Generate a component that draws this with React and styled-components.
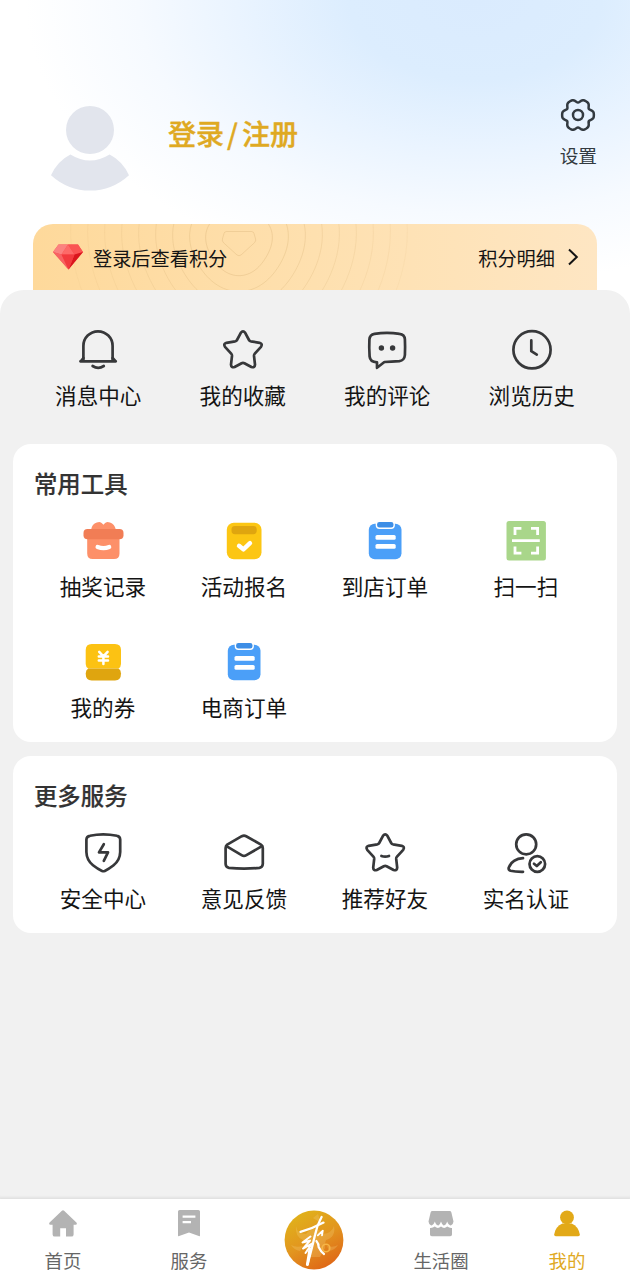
import React from "react";
import styled, { createGlobalStyle } from "styled-components";

const GlobalStyle = createGlobalStyle`
  * {
    box-sizing: border-box;
  }
  body {
    margin: 0;
    background: #f1f1f1;
    font-family: "Noto Sans CJK SC", sans-serif;
    color: #141414;
  }
`;

const DARK = "#37383a";

const starPath =
  "M17.8 2.8 Q20 -0.2 22.2 2.8 L26 10 Q26.6 11 27.8 11.3 L36.6 12.8 Q39.9 13.8 38 16.8 L31.8 23.6 Q30.9 24.6 31 25.9 L32 34.6 Q31.8 38 28.4 37 L21.4 33.2 Q20 32.5 18.6 33.2 L11.6 37 Q8.2 38 8 34.6 L9 25.9 Q9.1 24.6 8.2 23.6 L2 16.8 Q0.1 13.8 3.4 12.8 L12.2 11.3 Q13.4 11 14 10 Z";

const icons = {
  bell: (
    <>
      <path d="M5.4 30.5V15.9a14.6 14.6 0 0 1 29.2 0V30.5" />
      <path d="M2.4 31.3H37.8M5.4 28L3 31M34.6 28L37.2 31" />
      <path d="M14.6 36q5.6 3.6 11.2 0" />
    </>
  ),
  star: <path d={starPath} />,
  comment: (
    <>
      <path d="M7.5 3.8Q20 2 32.5 3.8Q37.6 4.4 37.9 9.4Q38.3 17 37.9 25Q37.4 30.4 32.4 31.2Q24 32 17.4 32L10 37.8V32.4Q3 32 2.6 26.4Q2 17 2.4 9.6Q2.8 4.4 7.5 3.8Z" />
      <g fill={DARK} stroke="none">
        <circle cx="14.4" cy="18" r="2.7" />
        <circle cx="25.6" cy="18" r="2.7" />
      </g>
    </>
  ),
  clock: (
    <>
      <circle cx="20" cy="19.8" r="18.6" />
      <path d="M19.3 10.4V21.2L24.8 24.6" />
    </>
  ),
  gift: (
    <g stroke="none">
      <path
        fill="#fd9069"
        d="M4.2 15H36.5V32.5Q36.5 38 31 38H9.7Q4.2 38 4.2 32.5ZM8 9Q9 3 13.8 1.6Q17.5 0.2 19.2 2.6L20.4 3.8L21.6 2.6Q23.3 0.2 27 1.6Q31.5 3 33 9Z"
      />
      <rect x="0.5" y="8" width="40" height="10.2" rx="4" fill="#f17d55" />
      <path
        d="M14.6 26Q20.6 28.2 26.2 26"
        fill="none"
        stroke="#fff"
        strokeWidth="4.2"
      />
    </g>
  ),
  signup: (
    <g stroke="none">
      <rect x="2.8" y="1.7" width="34.7" height="36.5" rx="7" fill="#fcc613" />
      <rect x="7.5" y="5" width="25.2" height="8.2" rx="3.4" fill="#dfa50f" />
      <path
        d="M15 24.8L19.4 28.4L26 22.2"
        fill="none"
        stroke="#fff"
        strokeWidth="4.4"
      />
    </g>
  ),
  order: (
    <g stroke="none">
      <rect x="3.8" y="2.7" width="32.7" height="35.5" rx="6" fill="#4b9ff8" />
      <rect
        x="11.4"
        y="0.2"
        width="17.8"
        height="7"
        rx="3"
        fill="#3d8ee6"
        stroke="#fff"
        strokeWidth="1.4"
      />
      <rect x="10.5" y="14" width="20.2" height="4.8" rx="1.6" fill="#fff" />
      <rect x="10.5" y="23" width="20.2" height="4.8" rx="1.6" fill="#fff" />
    </g>
  ),
  scan: (
    <>
      <rect
        x="0.5"
        y="0"
        width="39.4"
        height="39.4"
        rx="2.5"
        fill="#a9d68a"
        stroke="none"
      />
      <path
        d="M9 14V7.4H15.4M25 7.4H31.6V14M31.6 25.4V32.2H25M15.4 32.2H9V25.4M6 19.7H33.8"
        stroke="#fff"
        strokeWidth="2.8"
        strokeLinecap="butt"
        strokeLinejoin="miter"
      />
    </>
  ),
  coupon: (
    <g stroke="none">
      <path
        fill="#fcc213"
        d="M8.7 2H32Q38 2 38 8V22Q38 25 35.5 26.6H5.2Q2.7 25 2.7 22V8Q2.7 2 8.7 2Z"
      />
      <path
        fill="#dfa50f"
        d="M5.2 26.6H35.5Q38 28 38 31.5Q38 38.4 32 38.4H8.7Q2.7 38.4 2.7 31.5Q2.7 28 5.2 26.6Z"
      />
      <path
        d="M16.2 9.8L20.4 14.4L24.6 9.8M20.4 14.4V22M15.8 14.6H25M15.8 18.4H25"
        fill="none"
        stroke="#fff"
        strokeWidth="2.5"
      />
    </g>
  ),
  shield: (
    <>
      <path d="M7 2.8Q20 -0.2 34 2.8Q37 3.3 37.2 6.5V19Q37 27 30.6 32.3Q26 36 21.8 37.9Q20.4 38.6 19 37.9Q14.6 36 10 32.3Q3.6 27 3.4 19V6.5Q3.6 3.3 7 2.8Z" />
      <path d="M20.8 11.2L16 19.4H25L20.8 27.8" />
    </>
  ),
  mail: (
    <>
      <path d="M3.2 11.6L17.8 3.2Q20 2 22.2 3.2L37 11.6Q38.8 12.8 38.8 15V31Q38.6 34.4 35.4 34.9Q20 36.4 5 34.9Q1.8 34.4 1.6 31V15Q1.6 12.8 3.2 11.6Z" />
      <path d="M2.4 13.2L17.6 22.2Q20 23.6 22.4 22.2L38 13.2" />
    </>
  ),
  recommend: (
    <>
      <path d={starPath} transform="translate(0.2 0)" />
      <path d="M16.4 23Q20.2 24.4 24 23" />
    </>
  ),
  verify: (
    <>
      <circle cx="20.2" cy="11.3" r="10" />
      <path d="M17 25.2Q6.2 26 2.8 34.4Q2 37 4.6 37.8Q9 38.9 17 38.8" />
      <circle cx="31.3" cy="31" r="7.8" />
      <path d="M28 30.8L30.8 33L34.8 29.2" />
    </>
  ),
};

const tabIcons = {
  home: (
    <path d="M12.9 0.8Q14 -0.1 15.1 0.8L27.4 12.6Q28.6 14.2 26.6 14.7H24.6V24.4Q24.6 26.6 22.4 26.6H17V18.2H11.2V26.6H5.8Q3.6 26.6 3.6 24.4V14.7H1.4Q-0.6 14.2 0.6 12.6Z" />
  ),
  service: (
    <>
      <path d="M4.6 0H23.4Q25 0 25 1.6V25.4Q25 26.6 23.8 26L14 22.6L4.2 26Q3 26.6 3 25.4V1.6Q3 0 4.6 0Z" />
      <path
        d="M7.6 6.6H20.4M7.6 12.2H16"
        stroke="#fff"
        strokeWidth="2.2"
        fill="none"
      />
    </>
  ),
  life: (
    <>
      <path d="M5.4 1H22.6Q24 1 24.4 2.4L26.5 11.6Q26.3 14.6 23.8 15.4Q21.6 15.6 20.2 11.6Q18.6 15.8 16.6 15.4Q15 15 14 11.6Q13 15 11.4 15.4Q9.4 15.8 7.8 11.6Q6.4 15.6 4.2 15.4Q1.7 14.6 1.5 11.6L3.6 2.4Q4 1 5.4 1Z" />
      <path d="M3 17.9Q5.6 18.2 7.8 16.6Q10.8 19.4 14 16.6Q17.2 19.4 20.2 16.6Q22.4 18.2 25 17.9V24.4Q25 26.2 23.2 26.2H4.8Q3 26.2 3 24.4Z" />
    </>
  ),
  mine: (
    <>
      <circle cx="14" cy="7.4" r="6.9" />
      <path d="M9.4 13.6H18.6Q25.4 16.4 26.8 24.6Q27 26.3 25.2 26.3H2.8Q1 26.3 1.2 24.6Q2.6 16.4 9.4 13.6Z" />
    </>
  ),
};

const quickLinks = [
  { icon: "bell", label: "消息中心" },
  { icon: "star", label: "我的收藏" },
  { icon: "comment", label: "我的评论" },
  { icon: "clock", label: "浏览历史" },
];

const tools = [
  { icon: "gift", label: "抽奖记录" },
  { icon: "signup", label: "活动报名" },
  { icon: "order", label: "到店订单" },
  { icon: "scan", label: "扫一扫" },
  { icon: "coupon", label: "我的券" },
  { icon: "order", label: "电商订单" },
];

const services = [
  { icon: "shield", label: "安全中心" },
  { icon: "mail", label: "意见反馈" },
  { icon: "recommend", label: "推荐好友" },
  { icon: "verify", label: "实名认证" },
];

// six soft teeth around the centre
const gearPath = () => {
  const points = [];
  for (let i = 0; i < 120; i++) {
    const a = (i / 120) * Math.PI * 2;
    const r = 14.6 + 1.7 * Math.cos(6 * a) - 0.45 * Math.cos(12 * a);
    points.push(
      `${(18 + r * Math.cos(a)).toFixed(2)} ${(18 + r * Math.sin(a)).toFixed(2)}`
    );
  }
  return `M${points.join("L")}Z`;
};

// one contour line of the points card pattern, a triangle that gets rounder outwards
const contour = (radius) => {
  const bump = 0.3 / Math.sqrt(radius);
  const points = [];
  for (let i = 0; i < 90; i++) {
    const a = (i / 90) * Math.PI * 2;
    const r = radius * (1 - bump * Math.sin(3 * a));
    points.push(
      `${(206 + r * Math.cos(a)).toFixed(2)} ${(18 + r * Math.sin(a) * 0.97).toFixed(2)}`
    );
  }
  return `M${points.join("L")}Z`;
};

const LinkItem = ({ icon, label }) => (
  <Item>
    <ItemIcon viewBox="0 0 40 40">{icons[icon]}</ItemIcon>
    <ItemLabel>{label}</ItemLabel>
  </Item>
);

const Tab = ({ icon, label, active }) => (
  <TabItem $active={active}>
    <TabIcon viewBox="0 0 28 27" $active={active}>
      {tabIcons[icon]}
    </TabIcon>
    <span>{label}</span>
  </TabItem>
);

const App = () => {
  return (
    <>
      <GlobalStyle />
      <Page>
        <Header>
          <Profile>
            <Avatar viewBox="0 0 80 86">
              <circle cx="40" cy="24" r="24" />
              <path d="M20.4 48.4Q40 60.4 59.6 48.4Q72.6 55 79 69.2Q62 84.6 40 84.6Q18 84.6 1 69.2Q7.4 55 20.4 48.4Z" />
            </Avatar>
            <Login>
              登录<Slash>/</Slash>注册
            </Login>
            <Settings>
              <GearIcon viewBox="0 0 36 36">
                <path d={gearPath()} />
                <circle cx="18" cy="18" r="5" />
              </GearIcon>
              <span>设置</span>
            </Settings>
          </Profile>
          <PointsCard>
            <Contours viewBox="0 0 564 66">
              <path d="M193.5 7.5H218.5Q220.5 7.5 221 9.5L222.6 15Q223 17 221.6 18.6L208 31Q206 32.4 204 31L190.4 18.6Q189 17 189.4 15L191 9.5Q191.5 7.5 193.5 7.5Z" />
              {[33, 49, 66, 83, 100, 117, 134, 151, 168].map((r, i) => (
                <path key={r} d={contour(r)} opacity={1 - i * 0.09} />
              ))}
            </Contours>
            <Gem viewBox="0 0 30 26">
              <path d="M5.5 0.5H25L30 8L15.5 25.6L0 8Z" fill="#f9494c" />
              <path d="M5.5 0.5H15L8.5 10.6L0 8Z" fill="#fb8280" />
              <path d="M0 8L8.5 10.6L15.5 25.6Z" fill="#f76363" />
              <path d="M15 0.5L21.5 10.6H8.5Z" fill="#fd6a68" />
              <path d="M15 0.5H25L30 8L21.5 10.6Z" fill="#fa5453" />
              <path d="M30 8L21.5 10.6L15.5 25.6Z" fill="#d9161d" />
              <path d="M8.5 10.6H21.5L15.5 25.6Z" fill="#f23a3e" />
            </Gem>
            <PointsText>登录后查看积分</PointsText>
            <PointsLink>
              积分明细
              <Chevron viewBox="0 0 12 18">
                <path d="M2 1.5L9.8 9L2 16.5" />
              </Chevron>
            </PointsLink>
          </PointsCard>
        </Header>

        <Content>
          <QuickRow>
            {quickLinks.map((item) => (
              <LinkItem key={item.label} {...item} />
            ))}
          </QuickRow>

          <Card>
            <CardTitle>常用工具</CardTitle>
            <Grid>
              {tools.map((item) => (
                <LinkItem key={item.label} {...item} />
              ))}
            </Grid>
          </Card>

          <Card>
            <CardTitle>更多服务</CardTitle>
            <Grid>
              {services.map((item) => (
                <LinkItem key={item.label} {...item} />
              ))}
            </Grid>
          </Card>
        </Content>

        <TabBar>
          <Tab icon="home" label="首页" />
          <Tab icon="service" label="服务" />
          <TabItem>
            <Logo viewBox="0 0 60 60">
              <defs>
                <linearGradient id="logo" x1="0.2" y1="0" x2="0.75" y2="1">
                  <stop offset="0" stopColor="#e0b41a" />
                  <stop offset="0.5" stopColor="#e2961f" />
                  <stop offset="1" stopColor="#df6416" />
                </linearGradient>
              </defs>
              <circle cx="30" cy="30" r="29.4" fill="url(#logo)" />
              <g fill="#f6cf7a" opacity="0.28">
                <path d="M12 16Q13 24 22 24Q26 19 30 19Q36 19 39 24Q48 23 50 16Q52 27 42 30Q40 34 41 38L36 47H26L21 38Q21 33 19 30Q11 27 12 16Z" />
                <path d="M7 35Q12 38 19 36L16 41Q10 40 7 35ZM54 35Q49 38 43 36L45 41Q51 40 54 35ZM29 8L34 4L37 13Z" />
              </g>
              <circle
                cx="42"
                cy="38"
                r="3.8"
                fill="none"
                stroke="#f7b545"
                strokeWidth="1.6"
              />
              <g
                fill="none"
                stroke="#fff"
                strokeLinecap="round"
                strokeLinejoin="round"
              >
                <path d="M16.5 21.8Q28 19 39.5 12.6" strokeWidth="2.3" />
                <path d="M37.6 7Q33 15 31 25Q27 42 23.6 54" strokeWidth="2.3" />
                <path d="M26 39L23.4 54.5" strokeWidth="3" />
                <path d="M33.8 25.4L38.8 20.6L38 25.4" strokeWidth="1.8" />
                <path
                  d="M26.5 26.5L18.5 32.5L26 30.6L19 38.6L28 33.5L21.5 43"
                  strokeWidth="2"
                />
                <path d="M32.4 31Q35 34 34.6 37Q37 42 40 44" strokeWidth="2.2" />
              </g>
            </Logo>
          </TabItem>
          <Tab icon="life" label="生活圈" />
          <Tab icon="mine" label="我的" active />
        </TabBar>
      </Page>
    </>
  );
};

const Page = styled.div`
  width: 630px;
  height: 1280px;
  display: flex;
  flex-direction: column;
  overflow: hidden;
  background: #fff;
`;

const Header = styled.header`
  height: 314px;
  flex: none;
  padding: 98px 33px 0;
  background: radial-gradient(
    ellipse 450px 285px at 475px 0,
    #daebfe 0%,
    #dcedfe 28%,
    #eaf4ff 53%,
    #f6faff 75%,
    #fff 100%
  );
`;

const Profile = styled.div`
  display: flex;
  align-items: flex-start;
  height: 126px;
`;

const Avatar = styled.svg`
  width: 80px;
  height: 86px;
  margin: 8px 0 0 17px;
  fill: #e2e5ed;
`;

const Login = styled.div`
  margin: 15px 0 0 38px;
  font-size: 28px;
  line-height: 40px;
  font-weight: 500;
  color: #dfa922;
  -webkit-text-stroke: 0.4px #dfa922;
`;

const Slash = styled.span`
  margin: 0 4px 0 3px;
`;

const Settings = styled.div`
  display: flex;
  flex-direction: column;
  align-items: center;
  margin-left: auto;
  font-size: 18.7px;
  line-height: 26px;
  color: #333a40;
`;

const GearIcon = styled.svg`
  width: 36px;
  height: 36px;
  margin: -1px 0 9px;
  fill: none;
  stroke: #333a40;
  stroke-width: 2.5;
`;

const PointsCard = styled.div`
  position: relative;
  display: flex;
  align-items: center;
  height: 66px;
  padding: 0 18px 0 20px;
  border-radius: 20px 20px 0 0;
  overflow: hidden;
  font-size: 19.2px;
  line-height: 28px;
  background: linear-gradient(90deg, #fed99b 0%, #fee0af 50%, #fee6c3 100%);
`;

const Contours = styled.svg`
  position: absolute;
  inset: 0;
  fill: none;
  stroke: #dcb77c;
  stroke-opacity: 0.4;
  stroke-width: 1;
`;

const Gem = styled.svg`
  position: relative;
  width: 30px;
  height: 26px;
  margin: -1px 10px 0 0;
`;

const PointsText = styled.span`
  position: relative;
  padding-top: 1px;
`;

const PointsLink = styled.div`
  position: relative;
  display: flex;
  align-items: center;
  gap: 12px;
  padding-top: 1px;
  margin-left: auto;
`;

const Chevron = styled.svg`
  width: 12px;
  height: 18px;
  margin-top: -2px;
  fill: none;
  stroke: #141414;
  stroke-width: 2;
`;

const Content = styled.main`
  flex: 1;
  margin-top: -24px;
  padding: 40px 13px 0;
  border-radius: 24px 24px 0 0;
  background: #f1f1f1;
`;

const QuickRow = styled.div`
  display: grid;
  grid-template-columns: repeat(4, 1fr);
  height: 114px;
  padding: 0 13px;
`;

const Item = styled.div`
  display: flex;
  flex-direction: column;
  align-items: center;
`;

const ItemIcon = styled.svg`
  width: 40px;
  height: 40px;
  overflow: visible;
  fill: none;
  stroke: ${DARK};
  stroke-width: 2.7;
  stroke-linecap: round;
  stroke-linejoin: round;
`;

const ItemLabel = styled.span`
  margin-top: 10px;
  font-size: 21.6px;
  line-height: 30px;
`;

const Card = styled.section`
  padding: 22px 20.6px 20px 19.4px;
  margin-bottom: 14px;
  border-radius: 18px;
  background: #fff;
`;

const CardTitle = styled.h2`
  margin: 0 0 21px 1.6px;
  font-size: 23.4px;
  line-height: 34px;
  font-weight: 500;
  color: #333;
  -webkit-text-stroke: 0.2px #333;
`;

const Grid = styled.div`
  display: grid;
  grid-template-columns: repeat(4, 1fr);
  row-gap: 41px;
`;

const TabBar = styled.nav`
  display: grid;
  grid-template-columns: repeat(5, 1fr);
  height: 81px;
  flex: none;
  background: #fff;
  box-shadow: 0 -1px 2px 1px #e2e2e2;
`;

const TabItem = styled.div`
  display: flex;
  flex-direction: column;
  align-items: center;
  padding-top: 11px;
  font-size: 18.4px;
  line-height: 26px;
  color: ${(props) => (props.$active ? "#dfa922" : "#666")};
`;

const TabIcon = styled.svg`
  width: 28px;
  height: 27px;
  margin-bottom: 10px;
  fill: ${(props) => (props.$active ? "#e2a918" : "#b3b3b3")};
`;

const Logo = styled.svg`
  width: 60px;
  height: 60px;
  margin-left: -2px;
  flex: none;
`;

export default App;
